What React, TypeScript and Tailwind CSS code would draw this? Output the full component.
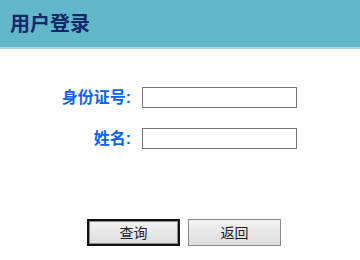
export default function App() {
  const font = { fontFamily: '"Liberation Sans", "Noto Sans CJK SC", sans-serif' };
  return (
    <div className="w-[360px] h-[260px] bg-white overflow-hidden" style={font}>
      <div className="h-[49px] bg-[#62b8c8] border-b-2 border-[#a8dae3] flex items-center pl-[10px]">
        <span className="text-[20px] font-bold text-[#14286a] leading-none">用户登录</span>
      </div>
      <div className="pt-[38px]">
        <div className="flex items-center h-[21px]">
          <span className="w-[131px] text-right text-[16px] font-bold text-[#0a64f0] leading-none">身份证号:</span>
          <input className="ml-[11px] w-[155px] h-[21px] border border-[#767676] bg-white outline-none" />
        </div>
        <div className="flex items-center h-[21px] mt-[20px]">
          <span className="w-[131px] text-right text-[16px] font-bold text-[#0a64f0] leading-none">姓名:</span>
          <input className="ml-[11px] w-[155px] h-[21px] border border-[#767676] bg-white outline-none" />
        </div>
        <div className="flex pl-[87px] gap-[8px] mt-[70px]">
          <button className="w-[93px] h-[27px] border-2 border-[#111] shadow-[inset_0_0_0_1px_#8a8a8a] bg-gradient-to-b from-[#f3f3f3] to-[#dcdcdc] text-[14px] text-[#222] leading-none">查询</button>
          <button className="w-[93px] h-[27px] border border-[#8a8a8a] bg-gradient-to-b from-[#f3f3f3] to-[#dcdcdc] text-[14px] text-[#222] leading-none">返回</button>
        </div>
      </div>
    </div>
  );
}
